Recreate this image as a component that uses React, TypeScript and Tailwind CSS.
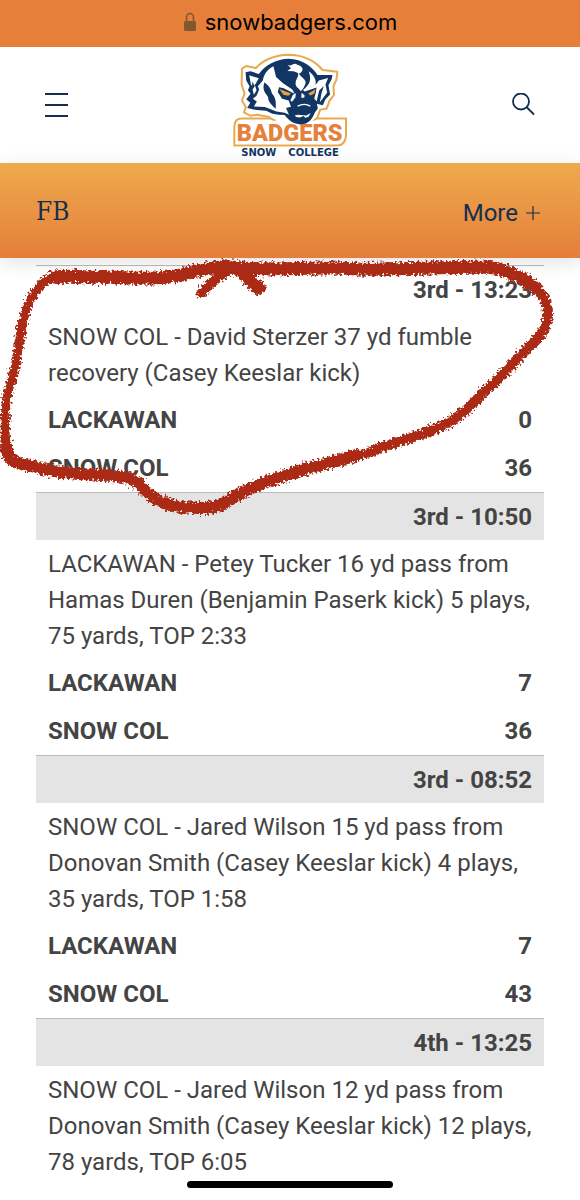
import React from "react";

type Play = {
  clock: string;
  summary: string;
  scores?: [string, number][];
};

const plays: Play[] = [
  {
    clock: "3rd - 13:23",
    summary: "SNOW COL - David Sterzer 37 yd fumble recovery (Casey Keeslar kick)",
    scores: [["LACKAWAN", 0], ["SNOW COL", 36]],
  },
  {
    clock: "3rd - 10:50",
    summary:
      "LACKAWAN - Petey Tucker 16 yd pass from Hamas Duren (Benjamin Paserk kick) 5 plays, 75 yards, TOP 2:33",
    scores: [["LACKAWAN", 7], ["SNOW COL", 36]],
  },
  {
    clock: "3rd - 08:52",
    summary:
      "SNOW COL - Jared Wilson 15 yd pass from Donovan Smith (Casey Keeslar kick) 4 plays, 35 yards, TOP 1:58",
    scores: [["LACKAWAN", 7], ["SNOW COL", 43]],
  },
  {
    clock: "4th - 13:25",
    summary:
      "SNOW COL - Jared Wilson 12 yd pass from Donovan Smith (Casey Keeslar kick) 12 plays, 78 yards, TOP 6:05",
  },
];

function Logo() {
  return (
    <a href="/" aria-label="Snow College Badgers" className="flex flex-col items-center">
      <svg viewBox="36 22 350 286" className="h-[95px] w-[116px]" aria-hidden="true">
        <path
          d="M43 248 Q43 223 64 222 H380 V274 Q378 302 354 304 H43Z"
          fill="#fff"
          stroke="#e9a94f"
          strokeWidth="6"
        />
        <path
          d="M66 72 L79 64 L108 70 C134 42 168 31 207 30 C251 31 287 49 309 76 L354 81 L351 105 L342 125 L344 151 L330 169 L322 192 L302 196 L294 219 L284 226 H160 L148 218 L112 211 L91 214 L72 204 L78 188 L66 168 L74 147 L65 120Z"
          fill="#fff"
          stroke="#e9a94f"
          strokeWidth="6"
          strokeLinejoin="round"
        />
        <path d="M155 214 H292 L272 240 H180Z" fill="#fff" />
        <text
          x="210"
          y="290"
          textAnchor="middle"
          fontFamily="Roboto, sans-serif"
          fontWeight="900"
          fontSize="71"
          fill="#e5813a"
        >
          BADGERS
        </text>
        <g transform="translate(48 15)">
          <path
            d="M29 68 L44 65 L69 73 C91 44 122 28 159 27 C201 28 231 52 246 76 L291 76 L289 88 L279 107 L284 135 L270 149 L262 167 L244 163 L247 177 L238 189 C230 210 218 224 197 225 C175 226 160 214 147 197 L129 196 L110 193 L91 184 L63 182 L34 176 L43 160 L31 149 L44 133 L36 122 L41 110 L31 93Z"
            fill="#123663"
          />
          <g fill="#fff">
            <path d="M40 77 L69 86 L57 106 L62 122 L54 136 L50 120 L57 109 L49 96 L49 109 L45 104Z" />
            <path d="M113 50 C98 56 84 73 81 93 L66 110 L70 120 L62 139 L51 148 L63 156 L54 171 L87 173 L103 179 L122 186 L147 190 L160 196 L151 176 L166 172 L159 153 L139 148 L126 127 L130 113 L144 116 L177 133 L170 120 L142 101 L121 82Z" />
            <path d="M153 43 C163 53 170 42 180 42 C190 48 201 48 201 61 L197 68 L190 72 C196 83 213 89 210 101 C207 111 202 119 196 125 C190 117 178 112 180 99 C181 87 191 80 187 70 L174 65 L155 64 L166 56Z" />
            <path d="M219 65 C234 75 244 91 240 106 L250 93 L278 85 L270 105 L275 129 L262 147 L253 158 L258 131 L265 109 L251 123 L246 144 L244 155 L236 148 L241 129 L243 114 L208 126 L202 121 C221 108 230 91 219 65Z" />
            <path d="M172 136 L181 131 L179 144 L169 157 L164 153Z" />
            <path d="M198 130 L207 137 L206 145 L197 145Z" />
          </g>
          <path d="M86 98 C77 123 91 132 97 143 C97 157 108 166 120 178 C121 160 121 145 109 133 C105 119 103 112 86 98Z" fill="#123663" />
          <path d="M131 118 L166 132 L158 139 L143 136Z" fill="#e9a23b" />
          <path d="M240 119 L218 132 L224 138 L236 133Z" fill="#e9a23b" />
          <path d="M186 170 Q207 159 224 170" fill="none" stroke="#fff" strokeWidth="4" />
          <path d="M168 190 L177 198 L187 196 L212 198 L226 191 L218 203 L209 205 L204 200 L193 204 L182 203Z" fill="#fff" />
        </g>
      </svg>
      <span className="flex gap-3 font-['DejaVu_Sans',sans-serif] text-[10px] font-bold leading-3 text-[#123663]">
        <span>SNOW</span>
        <span>COLLEGE</span>
      </span>
    </a>
  );
}

function Scribble() {
  return (
    <svg
      viewBox="0 0 580 300"
      className="pointer-events-none w-full overflow-visible"
      aria-hidden="true"
    >
      <defs>
        <filter id="chalk" x="-5%" y="-10%" width="110%" height="120%">
          <feTurbulence type="fractalNoise" baseFrequency="0.4" numOctaves="2" seed="7" result="noise" />
          <feDisplacementMap in="SourceGraphic" in2="noise" scale="9" xChannelSelector="R" yChannelSelector="G" />
          <feGaussianBlur stdDeviation="0.4" />
        </filter>
      </defs>
      <g
        transform="translate(0 -240)"
        filter="url(#chalk)"
        fill="none"
        stroke="#aa2c18"
        strokeLinecap="round"
        strokeLinejoin="round"
      >
        <path
          strokeWidth="13"
          d="M54 277 C75 274 90 279 112 277 C140 279 172 279 191 272 C211 268 223 265 242 268 C281 271 314 266 356 269 C400 270 445 267 486 267 C510 269 527 281 537 289"
        />
        <path
          strokeWidth="10"
          d="M528 281 C544 293 551 308 547 321 C543 338 530 345 519 357 C508 370 496 381 484 392 C470 407 460 417 446 424 C425 434 405 440 385 446 C356 458 334 463 319 466 C303 466 291 473 279 479"
        />
        <path
          strokeWidth="12"
          d="M356 455 C333 463 313 466 291 474 C263 482 241 491 223 504 C208 511 194 507 180 507 C162 504 150 498 141 486 C130 474 119 478 103 475 C73 475 47 471 22 464 C9 461 6 454 6 442"
        />
        <path
          strokeWidth="9"
          d="M6 448 C4 426 5 411 7 395 C14 374 18 357 20 337 C23 316 28 299 41 285 Q45 279 56 277"
        />
        <path strokeWidth="10" d="M201 293 Q213 280 226 272 L234 267 L247 280 L258 290" />
        <path strokeWidth="10" d="M231 266 L248 278 L261 288" />
      </g>
    </svg>
  );
}

export default function App() {
  return (
    <div className="min-h-screen bg-white font-[Roboto,sans-serif] text-[24px] leading-9 text-[#444444]">
      <div className="flex h-[47px] items-center justify-center gap-2 bg-[#e67f3a] pb-1 text-black">
        <svg viewBox="0 0 14 20" className="h-5 w-[14px]" aria-hidden="true">
          <path d="M3.5 10V5.5a3.5 4 0 0 1 7 0V10" fill="none" stroke="#80582f" strokeWidth="1.6" />
          <rect x="1" y="9" width="12" height="10" rx="1.5" fill="#80582f" />
        </svg>
        <span className="font-[Inter,sans-serif] text-[22px]">snowbadgers.com</span>
      </div>

      <header className="grid h-[116px] grid-cols-3 items-center px-11 text-[#142f50]">
        <button aria-label="Menu" className="w-6 justify-self-start">
          <svg viewBox="0 0 24 26" className="h-[26px] w-6" stroke="currentColor" strokeWidth="2" aria-hidden="true">
            <path d="M1 2H24M1 13H24M1 24H24" />
          </svg>
        </button>
        <div className="justify-self-center">
          <Logo />
        </div>
        <button aria-label="Search" className="justify-self-end">
          <svg
            viewBox="0 0 24 24"
            className="size-6"
            fill="none"
            stroke="currentColor"
            strokeWidth="1.8"
            strokeLinecap="round"
            aria-hidden="true"
          >
            <circle cx="9" cy="8.5" r="8" />
            <path d="M15 14.5L21.5 21" />
          </svg>
        </button>
      </header>

      <nav className="relative z-10 flex h-[95px] items-center justify-between bg-linear-to-b from-[#eeaa4d] to-[#e47e3b] px-9 pt-1 text-[#142f50] shadow-[0_4px_18px_rgba(0,0,0,0.12)]">
        <a href="#football" className="pb-1 font-['DejaVu_Serif_Condensed','DejaVu_Serif',serif] text-[26px]">
          FB
        </a>
        <button className="flex items-center gap-2 pr-1">
          More
          <svg viewBox="0 0 14 14" className="size-[14px]" stroke="currentColor" strokeWidth="1.2" aria-hidden="true">
            <path d="M0 7H14M7 0V14" />
          </svg>
        </button>
      </nav>

      <main className="relative px-9 pt-[7px]">
        <table className="w-full border-separate border-spacing-0" aria-label="Scoring summary">
          {plays.map((play, i) => (
            <tbody key={play.clock}>
              <tr className={i === 0 ? "bg-white" : "bg-[#e4e4e4]"}>
                <th
                  colSpan={2}
                  className="h-12 border-t border-[#bdbdbd] px-3 py-[5px] text-right font-bold"
                >
                  {play.clock}
                </th>
              </tr>
              <tr>
                <td colSpan={2} className="px-3 pb-[5px] pt-[6px]">
                  {play.summary}
                </td>
              </tr>
              {play.scores?.map(([team, score]) => (
                <tr key={team} className="font-bold">
                  <th scope="row" className="px-3 py-[6px] text-left">
                    {team}
                  </th>
                  <td className="px-3 py-[6px] text-right">{score}</td>
                </tr>
              ))}
            </tbody>
          ))}
        </table>
        <div className="pointer-events-none absolute inset-x-0 -top-[18px] z-20">
          <Scribble />
        </div>
      </main>

      <div className="fixed inset-x-0 bottom-3 z-30 flex justify-center">
        <div className="h-[7px] w-[206px] rounded-full bg-black" />
      </div>
    </div>
  );
}
